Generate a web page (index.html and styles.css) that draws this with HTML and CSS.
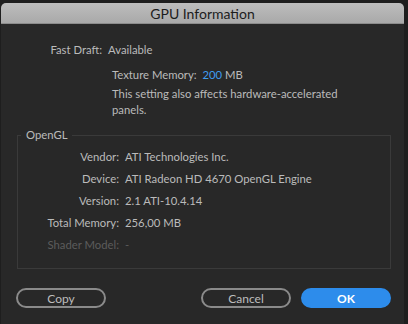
FILE: index.html
```html
<!DOCTYPE html>
<html>
<head>
<meta charset="utf-8">
<link rel="stylesheet" href="styles.css">
</head>
<body>
<div class="window">
  <div class="titlebar">GPU Information</div>
  <div class="content">
    <div class="row top-row">
      <span class="label">Fast Draft:</span>
      <span class="value">Available</span>
    </div>
    <div class="texture">
      <div class="texture-line">Texture Memory:&nbsp; <span class="num">200</span> MB</div>
      <p class="note">This setting also affects hardware-accelerated panels.</p>
    </div>
    <fieldset class="group">
      <legend>OpenGL</legend>
      <div class="row"><span class="label">Vendor:</span><span class="value">ATI Technologies Inc.</span></div>
      <div class="row"><span class="label">Device:</span><span class="value">ATI Radeon HD 4670 OpenGL Engine</span></div>
      <div class="row"><span class="label">Version:</span><span class="value">2.1 ATI-10.4.14</span></div>
      <div class="row"><span class="label">Total Memory:</span><span class="value">256,00 MB</span></div>
      <div class="row dim"><span class="label">Shader Model:</span><span class="value">-</span></div>
    </fieldset>
    <div class="buttons">
      <button class="btn">Copy</button>
      <div class="spacer"></div>
      <button class="btn">Cancel</button>
      <button class="btn primary">OK</button>
    </div>
  </div>
</div>
</body>
</html>
```
FILE: styles.css
```css
html, body {
  margin: 0;
  padding: 0;
  background: #1e1e1e;
  width: 408px;
  height: 324px;
  overflow: hidden;
}
body {
  font-family: "Lato", "Open Sans", sans-serif;
  font-size: 11.3px;
  color: #bbbbbb;
}
.window {
  margin: 3px 0 0 1px;
  width: 403px;
  height: 321px;
  background: #282828;
  border-radius: 5px 5px 0 0;
  overflow: hidden;
}
.titlebar {
  height: 21px;
  line-height: 22px;
  text-align: center;
  font-size: 14px;
  color: #1c1c1c;
  background: linear-gradient(#bdbdbd, #a9a9a9);
  border-bottom: 1px solid #8c8c8c;
  box-sizing: border-box;
}
.content {
  padding: 18px 0 0 0;
}
.row {
  display: grid;
  grid-template-columns: 101px auto;
  column-gap: 6px;
  line-height: 22px;
  white-space: nowrap;
}
.top-row {
  line-height: 16px;
}
.label {
  text-align: right;
}
.texture {
  margin: 9px 0 0 111px;
  line-height: 16px;
}
.num {
  color: #3f9cf0;
}
.note {
  margin: 3px 0 0 0;
  width: 230px;
}
.group {
  margin: 9px 13px 0 16px;
  padding: 3px 0 12px 0;
  border: 1px solid #3a3a3a;
}
.group legend {
  margin-left: 3px;
  padding: 0 5px;
  line-height: 16px;
}
.group .label {
  margin-left: -1px;
}
.dim {
  color: #5c5c5c;
}
.buttons {
  display: flex;
  margin: 19px 0 0 15px;
  width: 375px;
  gap: 10px;
}
.spacer {
  flex: 1;
}
.btn {
  width: 90px;
  height: 20px;
  padding: 0;
  border: 2px solid #8a8a8a;
  border-radius: 10px;
  background: transparent;
  color: #bdbdbd;
  font-family: "Lato", "Open Sans", sans-serif;
  font-size: 12px;
}
.btn.primary {
  background: #2d8ceb;
  border-color: #2d8ceb;
  color: #ffffff;
  font-weight: bold;
}
```
